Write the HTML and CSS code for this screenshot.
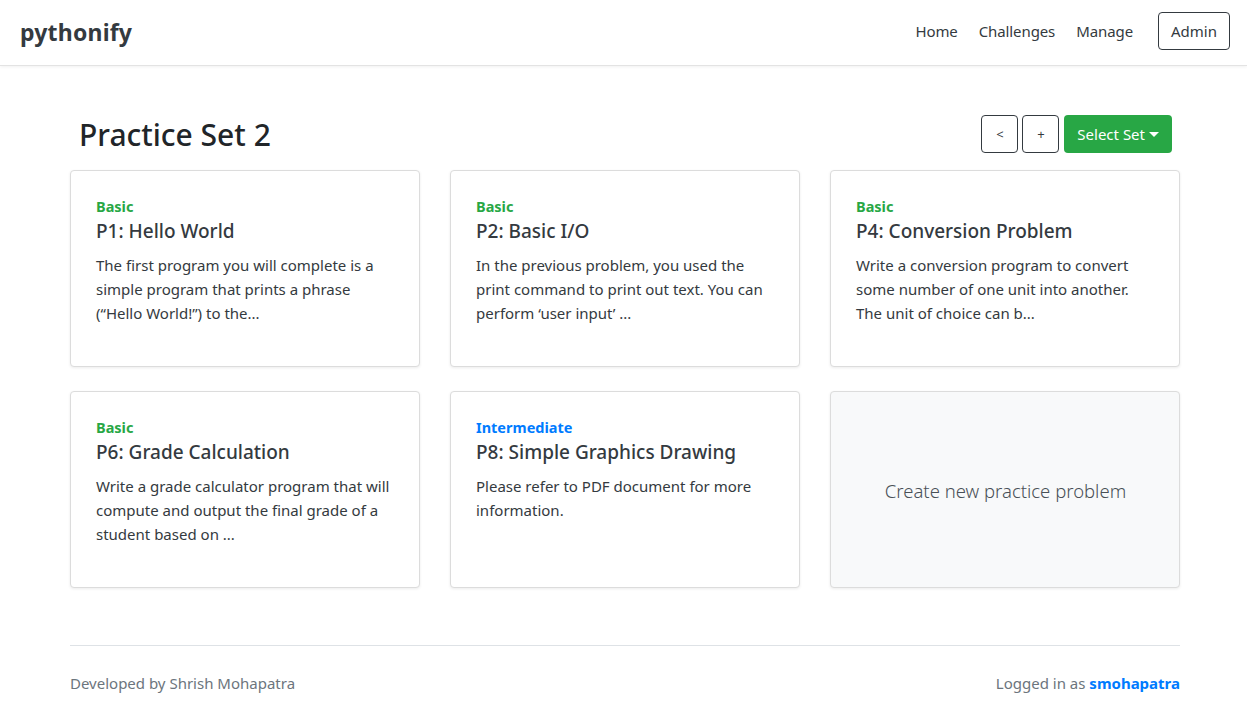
FILE: index.html
```html
<!DOCTYPE html>
<html>
<head>
<meta charset="utf-8">
<link rel="stylesheet" href="styles.css">
</head>
<body>
<nav class="navbar">
  <a class="brand">pythonify</a>
  <div class="nav-links">
    <a class="nav-link">Home</a>
    <a class="nav-link">Challenges</a>
    <a class="nav-link">Manage</a>
    <a class="btn-admin">Admin</a>
  </div>
</nav>
<main class="container">
  <div class="page-header">
    <h1 class="page-title">Practice Set 2</h1>
    <div class="actions">
      <button class="btn-outline">&lt;</button>
      <button class="btn-outline">+</button>
      <button class="btn-green">Select Set <span class="caret"></span></button>
    </div>
  </div>
  <div class="grid">
    <div class="card">
      <div class="level basic">Basic</div>
      <div class="card-title">P1: Hello World</div>
      <p class="card-text">The first program you will complete is a simple program that prints a phrase (“Hello World!”) to the...</p>
    </div>
    <div class="card">
      <div class="level basic">Basic</div>
      <div class="card-title">P2: Basic I/O</div>
      <p class="card-text">In the previous problem, you used the print command to print out text. You can perform ‘user input’ ...</p>
    </div>
    <div class="card">
      <div class="level basic">Basic</div>
      <div class="card-title">P4: Conversion Problem</div>
      <p class="card-text">Write a conversion program to convert some number of one unit into another. The unit of choice can b...</p>
    </div>
    <div class="card">
      <div class="level basic">Basic</div>
      <div class="card-title">P6: Grade Calculation</div>
      <p class="card-text">Write a grade calculator program that will compute and output the final grade of a student based on ...</p>
    </div>
    <div class="card">
      <div class="level intermediate">Intermediate</div>
      <div class="card-title">P8: Simple Graphics Drawing</div>
      <p class="card-text">Please refer to PDF document for more information.</p>
    </div>
    <div class="card card-new">
      <span>Create new practice problem</span>
    </div>
  </div>
  <footer class="footer">
    <span>Developed by Shrish Mohapatra</span>
    <span>Logged in as <b class="user">smohapatra</b></span>
  </footer>
</main>
</body>
</html>
```
FILE: styles.css
```css
* { box-sizing: border-box; }
body {
  margin: 0;
  font-family: "Noto Sans", "Open Sans", sans-serif;
  font-size: 15px;
  color: #212529;
  background: #fff;
}
.navbar {
  height: 66px;
  display: flex;
  align-items: center;
  justify-content: space-between;
  padding: 0 17px 4px 20px;
  border-bottom: 1px solid #e3e3e3;
  box-shadow: 0 1px 3px rgba(0,0,0,0.06);
}
.brand {
  font-size: 23px;
  font-weight: 700;
  color: #343a40;
  letter-spacing: 0.2px;
  margin-top: 2px;
}
.nav-links {
  display: flex;
  align-items: center;
}
.nav-link {
  color: #343a40;
  font-size: 15px;
  margin-right: 21px;
  letter-spacing: -0.1px;
}
.nav-link:nth-child(3) {
  margin-right: 25px;
}
.btn-admin {
  color: #343a40;
  font-size: 15px;
  border: 1px solid #343a40;
  border-radius: 4px;
  height: 38px;
  padding: 0 12px;
  display: flex;
  align-items: center;
}
.container {
  width: 1110px;
  margin-left: 70px;
  padding-top: 48px;
}
.page-header {
  display: flex;
  justify-content: space-between;
  align-items: center;
  height: 40px;
  padding: 0 8px 0 9px;
  margin-bottom: 16px;
}
.page-title {
  margin: 0;
  font-size: 30px;
  font-weight: 500;
  color: #212529;
}
.actions {
  display: flex;
  gap: 4px;
}
.btn-outline {
  width: 37px;
  height: 38px;
  border: 1px solid #343a40;
  border-radius: 4px;
  background: #fff;
  color: #343a40;
  font-family: inherit;
  font-size: 13px;
  padding: 0;
}
.btn-green {
  height: 38px;
  padding: 0 13px;
  margin-left: 1px;
  border: none;
  border-radius: 4px;
  background: #28a745;
  color: #fff;
  font-family: inherit;
  font-size: 15px;
  display: flex;
  align-items: center;
  gap: 4px;
}
.caret {
  width: 0;
  height: 0;
  border-left: 5px solid transparent;
  border-right: 5px solid transparent;
  border-top: 5px solid #fff;
}
.grid {
  display: grid;
  grid-template-columns: repeat(3, 350px);
  column-gap: 30px;
  row-gap: 24px;
}
.card {
  height: 197px;
  border: 1px solid #dcdcdc;
  border-radius: 4px;
  box-shadow: 0 1px 3px rgba(0,0,0,0.08);
  padding: 25px 24px 20px 25px;
  background: #fff;
}
.level {
  font-size: 14.5px;
  font-weight: 700;
  line-height: 20px;
}
.basic { color: #28a745; }
.intermediate { color: #007bff; }
.card-title {
  font-size: 19px;
  font-weight: 500;
  color: #343a40;
  line-height: 26px;
  margin-top: 2px;
  margin-bottom: 9px;
}
.card-text {
  margin: 0;
  font-size: 15px;
  line-height: 24px;
  color: #343a40;
}
.card-new {
  background: #f8f9fa;
  display: flex;
  align-items: center;
  justify-content: center;
  padding-bottom: 24px;
}
.card-new span {
  font-size: 18.5px;
  font-weight: 300;
  color: #495057;
}
.footer {
  margin-top: 57px;
  border-top: 1px solid #dee2e6;
  display: flex;
  justify-content: space-between;
  padding-top: 27px;
  color: #6c757d;
  font-size: 15px;
}
.user {
  color: #007bff;
  font-weight: 700;
}
```
